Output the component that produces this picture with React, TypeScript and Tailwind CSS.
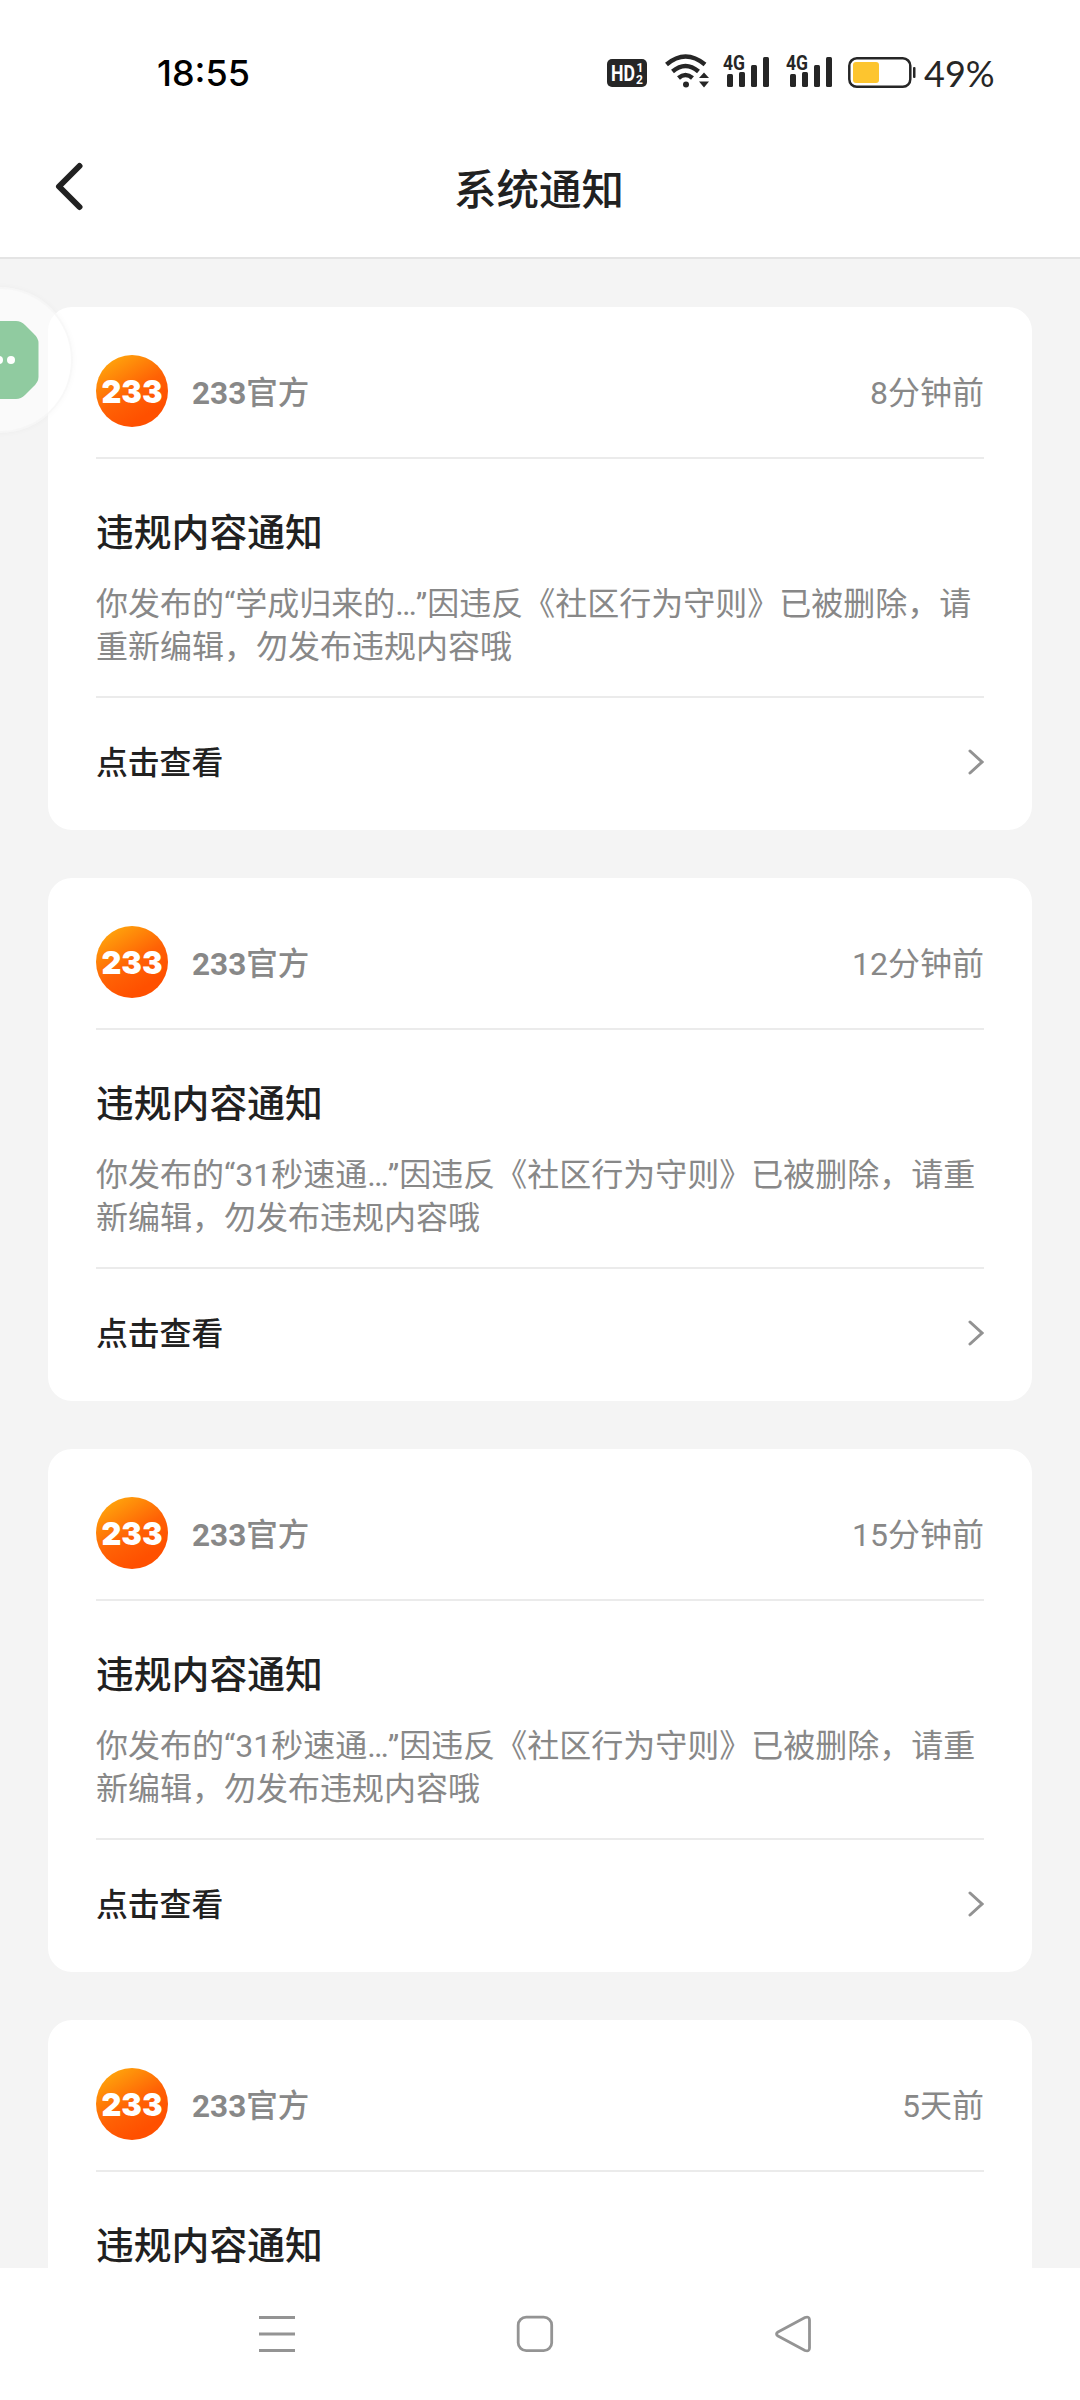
type Notice = { time: string; lines?: [string, string, string] };

const notices: Notice[] = [
  { time: "8分钟前", lines: ["你发布的“学成归来的…", "”因违反《社区行为守则》已被删除，请", "重新编辑，勿发布违规内容哦"] },
  { time: "12分钟前", lines: ["你发布的“31秒速通…", "”因违反《社区行为守则》已被删除，请重", "新编辑，勿发布违规内容哦"] },
  { time: "15分钟前", lines: ["你发布的“31秒速通…", "”因违反《社区行为守则》已被删除，请重", "新编辑，勿发布违规内容哦"] },
  { time: "5天前" },
];

function Signal() {
  return (
    <svg width="48" height="36" viewBox="0 0 48 36" className="block" fill="#262626">
      <text x="0" y="18" fontFamily="Roboto" fontWeight="700" fontSize="21" textLength="22" lengthAdjust="spacingAndGlyphs">4G</text>
      <rect x="4" y="22" width="6" height="13" rx="1.5" />
      <rect x="16" y="20" width="6" height="15" rx="1.5" />
      <rect x="28" y="13" width="6" height="22" rx="1.5" />
      <rect x="40" y="5" width="6" height="30" rx="1.5" />
    </svg>
  );
}

function StatusBar() {
  return (
    <div className="flex h-[130px] items-start pl-[157px] pt-[52px]">
      <div className="w-[450px] text-[36px] leading-[43px] font-medium text-black font-['Inter',sans-serif]">18:55</div>
      <svg width="40" height="36" viewBox="0 0 40 36" className="block">
        <rect x="0" y="7" width="40" height="28" rx="5" fill="#262626" />
        <g fill="#fff" fontFamily="Roboto" fontWeight="700">
          <text x="4" y="29" fontSize="22" textLength="24" lengthAdjust="spacingAndGlyphs">HD</text>
          <text x="29.500" y="19.500" fontSize="12">1</text>
          <text x="29" y="32" fontSize="12">2</text>
        </g>
      </svg>
      <svg width="45" height="36" viewBox="0 0 45 36" className="ml-[18px] block" fill="none" stroke="#262626" strokeWidth="4.500">
        <path d="M1.500 12.500Q20.500 -3.500 40 12.500M7.500 19.500Q20.500 8.500 33.500 19.500M13.500 26Q20.500 20 27.500 26" />
        <circle cx="21" cy="32.500" r="3" fill="#262626" stroke="none" />
        <path d="M34 26L39 20.500L44 26ZM34 29.500L39 35.500L44 29.500Z" fill="#262626" stroke="none" />
      </svg>
      <div className="ml-[13px] flex gap-[15px]">
        <Signal />
        <Signal />
      </div>
      <svg width="68" height="38" viewBox="0 0 68 38" className="ml-[14px] block">
        <rect x="1.300" y="6.300" width="61" height="28.500" rx="7.500" fill="none" stroke="#262626" strokeWidth="2.500" />
        <rect x="5" y="10" width="26" height="21" rx="3" fill="#fdc52f" />
        <rect x="65" y="15" width="2.500" height="11" rx="1" fill="#262626" />
      </svg>
      <div className="ml-[8px] text-[36px] leading-[43px] text-[#262626] font-['Lato',sans-serif]">49%</div>
    </div>
  );
}

function Avatar() {
  return (
    <svg width="72" height="72" viewBox="0 0 72 72" className="block">
      <defs>
        <linearGradient id="avatar" x1="0.1" y1="0.1" x2="0.6" y2="0.9">
          <stop offset="0" stopColor="#ffa50c" />
          <stop offset="0.6" stopColor="#ff6205" />
          <stop offset="1" stopColor="#ff5000" />
        </linearGradient>
      </defs>
      <circle cx="36" cy="36" r="36" fill="url(#avatar)" />
      <text x="5.500" y="47.500" fill="#fff" fontFamily="Inter" fontWeight="900" fontSize="32" textLength="61" lengthAdjust="spacingAndGlyphs">233</text>
    </svg>
  );
}

function NoticeCard({ time, lines }: Notice) {
  return (
    <article className="h-[523px] shrink-0 rounded-[24px] bg-white px-12">
      <header className="flex h-[152px] items-center border-b-2 border-[#ebebeb] pt-[18px] text-[#888]">
        <Avatar />
        <span className="ml-6 pt-1.5 text-[31.5px] font-bold">233<span className="font-medium">官方</span></span>
        <span className="ml-auto pt-1 text-[32px]">{time}</span>
      </header>
      <section className={lines ? "h-[239px] border-b-2 border-[#ebebeb] pt-[46px]" : "pt-[46px]"}>
        <h2 className="text-[37.8px] leading-[56px] font-medium text-[#212121]">违规内容通知</h2>
        {lines && (
          <p className="mt-[22px] text-[32px] leading-[43px] whitespace-nowrap text-[#888]">
            <span className="-mr-px">{lines[0]}</span>
            {lines[1]}
            <br />
            {lines[2]}
          </p>
        )}
      </section>
      {lines && (
        <footer className="flex h-[128px] items-center justify-between text-[31.8px] font-medium text-[#212121]">
          <span className="pt-[3px]">点击查看</span>
          <svg width="16" height="26" viewBox="0 0 16 26" fill="none" stroke="#929292" strokeWidth="3" strokeLinecap="round">
            <path d="M2 2L14 13L2 24" />
          </svg>
        </footer>
      )}
    </article>
  );
}

export default function App() {
  return (
    <div className="relative flex h-[2400px] w-[1080px] flex-col overflow-hidden bg-[#f4f4f4] font-['Roboto','Noto_Sans_CJK_SC',sans-serif]" lang="zh-CN">
      <div className="h-[259px] shrink-0 border-b-2 border-[#e4e4e4] bg-white">
        <StatusBar />
        <div className="flex h-[127px] items-start pl-[54px] pt-[32px]">
          <svg width="29" height="50" viewBox="0 0 29 50" fill="none" stroke="#212121" strokeWidth="6" strokeLinecap="round" strokeLinejoin="round">
            <path d="M25.500 4L5 24.500L25.500 45" />
          </svg>
          <h1 className="ml-[371px] pt-px text-[42.5px] leading-[56px] font-medium text-[#212121]">系统通知</h1>
        </div>
      </div>
      <main className="flex min-h-0 flex-1 flex-col gap-12 overflow-hidden px-12 pt-12">
        {notices.map((n) => (
          <NoticeCard key={n.time} time={n.time} lines={n.lines} />
        ))}
      </main>
      <nav className="flex h-[132px] shrink-0 items-start bg-white pl-[259px] pt-[47px]">
        <svg width="36" height="38" viewBox="0 0 36 38" fill="#949494">
          <path d="M0 1H36V4H0ZM0 17.500H36V20.500H0ZM0 34H36V37H0Z" />
        </svg>
        <svg width="38" height="38" viewBox="0 0 38 38" className="ml-[221px]" fill="none" stroke="#949494" strokeWidth="2.800">
          <rect x="2.200" y="2.200" width="33.500" height="33.500" rx="8" />
        </svg>
        <svg width="38" height="38" viewBox="0 0 38 38" className="ml-[220px]" fill="none" stroke="#949494" strokeWidth="2.800" strokeLinejoin="round">
          <path d="M4 17L31 2.500Q35.500 1 35.500 5V33Q35.500 37 31 35.500L4 21Q1 19 4 17Z" />
        </svg>
      </nav>
      <div className="absolute top-[287px] left-[-73px] h-[146px] w-[146px] rounded-full border-2 border-[#f4f4f4]/60 bg-white/50 shadow-[0_0_6px_rgba(0,0,0,0.03)]">
        <svg width="142" height="142" viewBox="-71 -71 142 142" className="block">
          <path d="M-40 -39H16Q21 -39 25 -35L33 -27Q38.500 -22 38.500 -17V17Q38.500 22 33 27L25 35Q21 39 16 39H-40Z" fill="#90cba0" />
          <circle cx="-1" cy="0" r="4" fill="#fff" />
          <circle cx="11" cy="0" r="4" fill="#fff" />
        </svg>
      </div>
    </div>
  );
}
